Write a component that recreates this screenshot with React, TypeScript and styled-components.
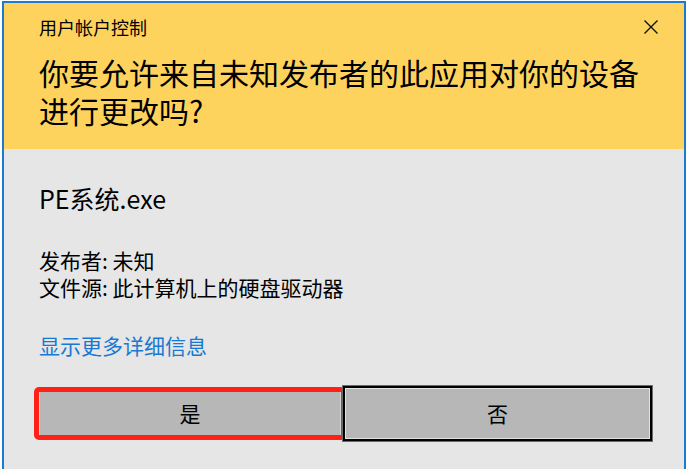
import React from "react";
import styled, { createGlobalStyle } from "styled-components";

const GlobalStyle = createGlobalStyle`
  html, body {
    margin: 0;
    padding: 0;
    background: #ffffff;
    overflow: hidden;
  }
  body {
    font-family: "Noto Sans CJK SC", "Noto Sans", sans-serif;
    color: #000000;
  }
`;

const Page = styled.div`
  width: 686px;
  height: 469px;
  padding: 1px 0 0 2px;
  box-sizing: border-box;
  overflow: hidden;
  display: flex;
`;

const Dialog = styled.div`
  width: 684px;
  height: 480px;
  flex: none;
  box-sizing: border-box;
  border: 2px solid #1a7bd3;
  border-bottom: none;
  background: #e6e6e6;
  display: flex;
  flex-direction: column;
`;

const Header = styled.div`
  background: #fed35d;
  height: 146px;
  flex: none;
  display: flex;
  flex-direction: column;
`;

const TitleRow = styled.div`
  height: 48px;
  display: flex;
  align-items: center;
  justify-content: space-between;
  padding: 0 26px 0 35px;
`;

const Title = styled.div`
  font-size: 18px;
  line-height: 24px;
`;

const CloseButton = styled.div`
  width: 14px;
  height: 14px;
  display: flex;
`;

const Heading = styled.div`
  margin-top: 2px;
  padding-left: 35px;
  font-size: 30px;
  line-height: 38px;
  width: 620px;
`;

const Body = styled.div`
  display: flex;
  flex-direction: column;
  padding: 0 0 0 35px;
`;

const ProgramName = styled.div`
  margin-top: 33px;
  font-size: 25px;
  line-height: 32px;
`;

const Details = styled.div`
  margin-top: 33px;
  font-size: 21px;
  line-height: 27px;
`;

const DetailLine = styled.div``;

const MoreLink = styled.div`
  margin-top: 31px;
  font-size: 21px;
  line-height: 27px;
  color: #1779d3;
`;

const ButtonRow = styled.div`
  margin-top: 26px;
  height: 57px;
  display: flex;
  align-items: center;
  padding-left: -1px;
`;

const ButtonBase = styled.div`
  box-sizing: border-box;
  background: #b7b7b7;
  display: flex;
  align-items: center;
  justify-content: center;
  font-size: 21px;
  line-height: 27px;
  position: relative;
`;

const YesButton = styled(ButtonBase)`
  width: 304px;
  height: 51px;
  margin-left: -1px;
  border: 2px solid #d4d4d4;
`;

const NoButton = styled(ButtonBase)`
  width: 311px;
  height: 57px;
  border: 1px solid #6a6a6a;
  box-shadow: inset 0 0 0 2px #000000, inset 0 0 0 3px #e2e2e2;
`;

const Highlight = styled.div`
  position: absolute;
  left: -6px;
  right: -6px;
  top: -3px;
  bottom: -3px;
  border: 5px solid #ff2116;
  border-radius: 5px;
  pointer-events: none;
`;

export default function App() {
  return (
    <>
      <GlobalStyle />
      <Page>
        <Dialog>
          <Header>
            <TitleRow>
              <Title>用户帐户控制</Title>
              <CloseButton>
                <svg width="14" height="14" viewBox="0 0 14 14">
                  <path
                    d="M0.5 0.5 L13.5 13.5 M13.5 0.5 L0.5 13.5"
                    stroke="#111"
                    strokeWidth="1.4"
                    fill="none"
                  />
                </svg>
              </CloseButton>
            </TitleRow>
            <Heading>你要允许来自未知发布者的此应用对你的设备进行更改吗?</Heading>
          </Header>
          <Body>
            <ProgramName>PE系统.exe</ProgramName>
            <Details>
              <DetailLine>发布者: 未知</DetailLine>
              <DetailLine>文件源: 此计算机上的硬盘驱动器</DetailLine>
            </Details>
            <MoreLink>显示更多详细信息</MoreLink>
            <ButtonRow>
              <YesButton>
                是
                <Highlight />
              </YesButton>
              <NoButton>否</NoButton>
            </ButtonRow>
          </Body>
        </Dialog>
      </Page>
    </>
  );
}
